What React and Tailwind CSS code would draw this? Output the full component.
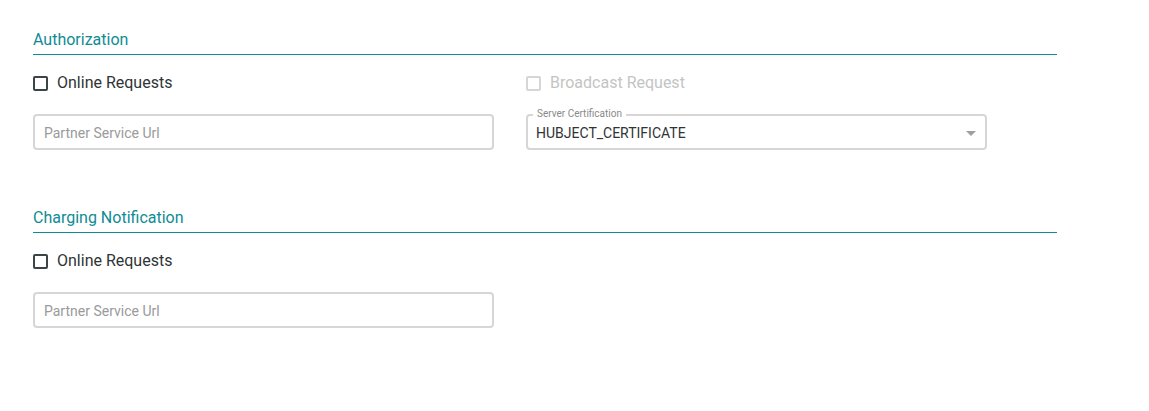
import React from "react";

function Checkbox({ label, disabled }) {
  return (
    <label className="flex items-center h-5 gap-[9px]">
      <span
        className={
          "w-[15px] h-[15px] rounded-[2px] border-2 " +
          (disabled ? "border-[#d6d6d6]" : "border-[#3c4446]")
        }
      />
      <span className={"text-[16px] leading-5 " + (disabled ? "text-[#c4c4c4]" : "text-[#2f3436]")}>
        {label}
      </span>
    </label>
  );
}

function TextInput({ placeholder }) {
  return (
    <div className="w-[461px] h-[36px] rounded-[4px] border-2 border-[#d6d6d6] flex items-center px-[9px] pt-[2px]">
      <span className="text-[14px] text-[#9a9a9a]">{placeholder}</span>
    </div>
  );
}

function SelectField() {
  return (
    <div className="relative w-[461px] h-[36px] rounded-[4px] border-2 border-[#d6d6d6] flex items-center pl-[8px] pr-[9px] pt-[2px]">
      <span className="absolute -top-[9px] left-[5px] px-[4px] bg-white text-[10px] leading-[14px] text-[#8a8a8a]">
        Server Certification
      </span>
      <span className="text-[14px] text-[#2f3436] flex-1">HUBJECT_CERTIFICATE</span>
      <svg width="10" height="5" viewBox="0 0 10 5">
        <path d="M0 0 L10 0 L5 5 Z" fill="#a0a0a0" />
      </svg>
    </div>
  );
}

function Section({ title, children }) {
  return (
    <div>
      <div className="w-[1024px] border-b border-[#0f8b95] pb-[4px]">
        <h2 className="text-[16px] leading-5 text-[#0f8b95] font-normal">{title}</h2>
      </div>
      {children}
    </div>
  );
}

export default function App() {
  return (
    <div
      className="bg-white w-[1149px] h-[411px] pl-[33px] pt-[30px]"
      style={{ fontFamily: "Roboto, 'Liberation Sans', sans-serif" }}
    >
      <Section title="Authorization">
        <div className="flex gap-[32px] mt-[18px]">
          <div className="w-[461px]">
            <Checkbox label="Online Requests" />
          </div>
          <div className="w-[461px]">
            <Checkbox label="Broadcast Request" disabled />
          </div>
        </div>
        <div className="flex gap-[32px] mt-[21px]">
          <TextInput placeholder="Partner Service Url" />
          <SelectField />
        </div>
      </Section>
      <div className="mt-[58px]">
        <Section title="Charging Notification">
          <div className="mt-[18px]">
            <Checkbox label="Online Requests" />
          </div>
          <div className="mt-[21px]">
            <TextInput placeholder="Partner Service Url" />
          </div>
        </Section>
      </div>
    </div>
  );
}
